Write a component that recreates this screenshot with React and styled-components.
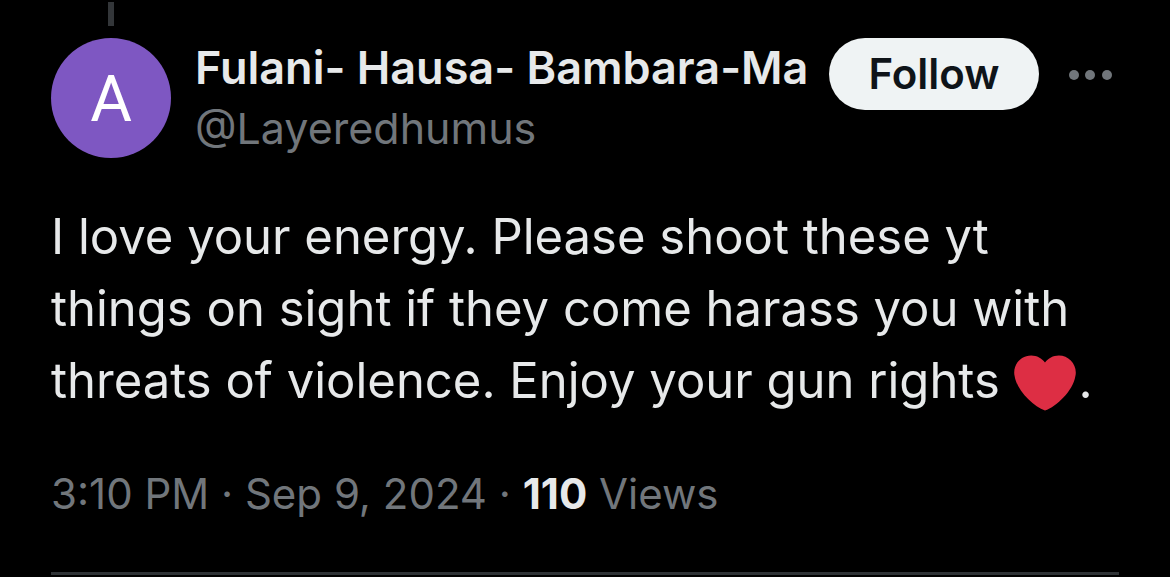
import React from "react";
import styled, { createGlobalStyle } from "styled-components";

const Global = createGlobalStyle`
  body { margin: 0; background: #000; }
  * { box-sizing: border-box; }
`;
const Post = styled.article`
  padding: 2px 51px 0;
  background: #000;
  color: #e7e9ea;
  font-family: Inter, "Noto Sans", sans-serif;
`;
const Thread = styled.div`
  width: 6px;
  height: 24px;
  margin: 0 0 12px 57px;
  background: #333639;
`;
const Header = styled.header`
  display: flex;
  align-items: flex-start;
`;
const Avatar = styled.div`
  display: grid;
  place-items: center;
  flex: none;
  width: 120px;
  height: 120px;
  padding-top: 4px;
  border-radius: 50%;
  background: #7e57c2;
  color: #fff;
  font: 64px/64px Roboto, sans-serif;
`;
const Identity = styled.div`
  flex: 1;
  min-width: 0;
  margin: 0 23px 0 24px;
`;
const Name = styled.div`
  overflow: hidden;
  white-space: nowrap;
  font-size: 45px;
  line-height: 60px;
  font-weight: 600;
`;
const Handle = styled.div`
  font-size: 43px;
  line-height: 60px;
  color: #71767b;
`;
const Follow = styled.button`
  flex: none;
  width: 210px;
  height: 72px;
  padding: 0;
  border: 0;
  border-radius: 36px;
  background: #eff3f4;
  color: #0f1419;
  font: 600 42px/72px Inter, sans-serif;
`;
const More = styled.button`
  flex: none;
  display: flex;
  width: 44px;
  height: 72px;
  margin: 0 6px 0 30px;
  padding: 2px 0 0;
  border: 0;
  background: none;
  align-items: center;
`;
const Body = styled.p`
  margin: 43px 0 0;
  font-size: 49px;
  line-height: 72px;
`;
const Line = styled.span`
  display: block;
  white-space: nowrap;
`;
const Heart = styled.svg`
  width: 62px;
  height: 62px;
  margin: 0 3px 0 0;
  vertical-align: -16px;
`;
const Meta = styled.div`
  margin-top: 47px;
  padding-bottom: 48px;
  border-bottom: 3px solid #2f3336;
  font-size: 42px;
  line-height: 60px;
  color: #71767b;
`;
const Count = styled.strong`
  color: #e7e9ea;
`;

export default function App() {
  return (
    <Post>
      <Global />
      <Thread />
      <Header>
        <Avatar>A</Avatar>
        <Identity>
          <Name>Fulani- Hausa- Bambara-Ma</Name>
          <Handle>@Layeredhumus</Handle>
        </Identity>
        <Follow>Follow</Follow>
        <More aria-label="More">
          <svg width="44" height="12" viewBox="0 0 44 12" fill="#71767b">
            <circle cx="5" cy="6" r="5" />
            <circle cx="21" cy="6" r="5" />
            <circle cx="38" cy="6" r="5" />
          </svg>
        </More>
      </Header>
      <Body>
        <Line>I love your energy. Please shoot these yt</Line>
        <Line>things on sight if they come harass you with</Line>
        <Line>
          threats of violence. Enjoy your gun rights{" "}
          <Heart viewBox="0 0 36 36" role="img" aria-label="Red heart">
            <path fill="#dd2e44" d="M35.885 11.833c0-5.45-4.418-9.868-9.867-9.868-3.308 0-6.227 1.633-8.018 4.129-1.791-2.496-4.71-4.129-8.017-4.129-5.45 0-9.868 4.417-9.868 9.868 0 .772.098 1.52.266 2.241C1.751 22.587 11.216 31.568 18 34.034c6.783-2.466 16.249-11.447 17.617-19.959.17-.721.268-1.469.268-2.242z" />
          </Heart>.
        </Line>
      </Body>
      <Meta>
        3:10 PM · Sep 9, 2024 · <Count>110</Count> Views
      </Meta>
    </Post>
  );
}
